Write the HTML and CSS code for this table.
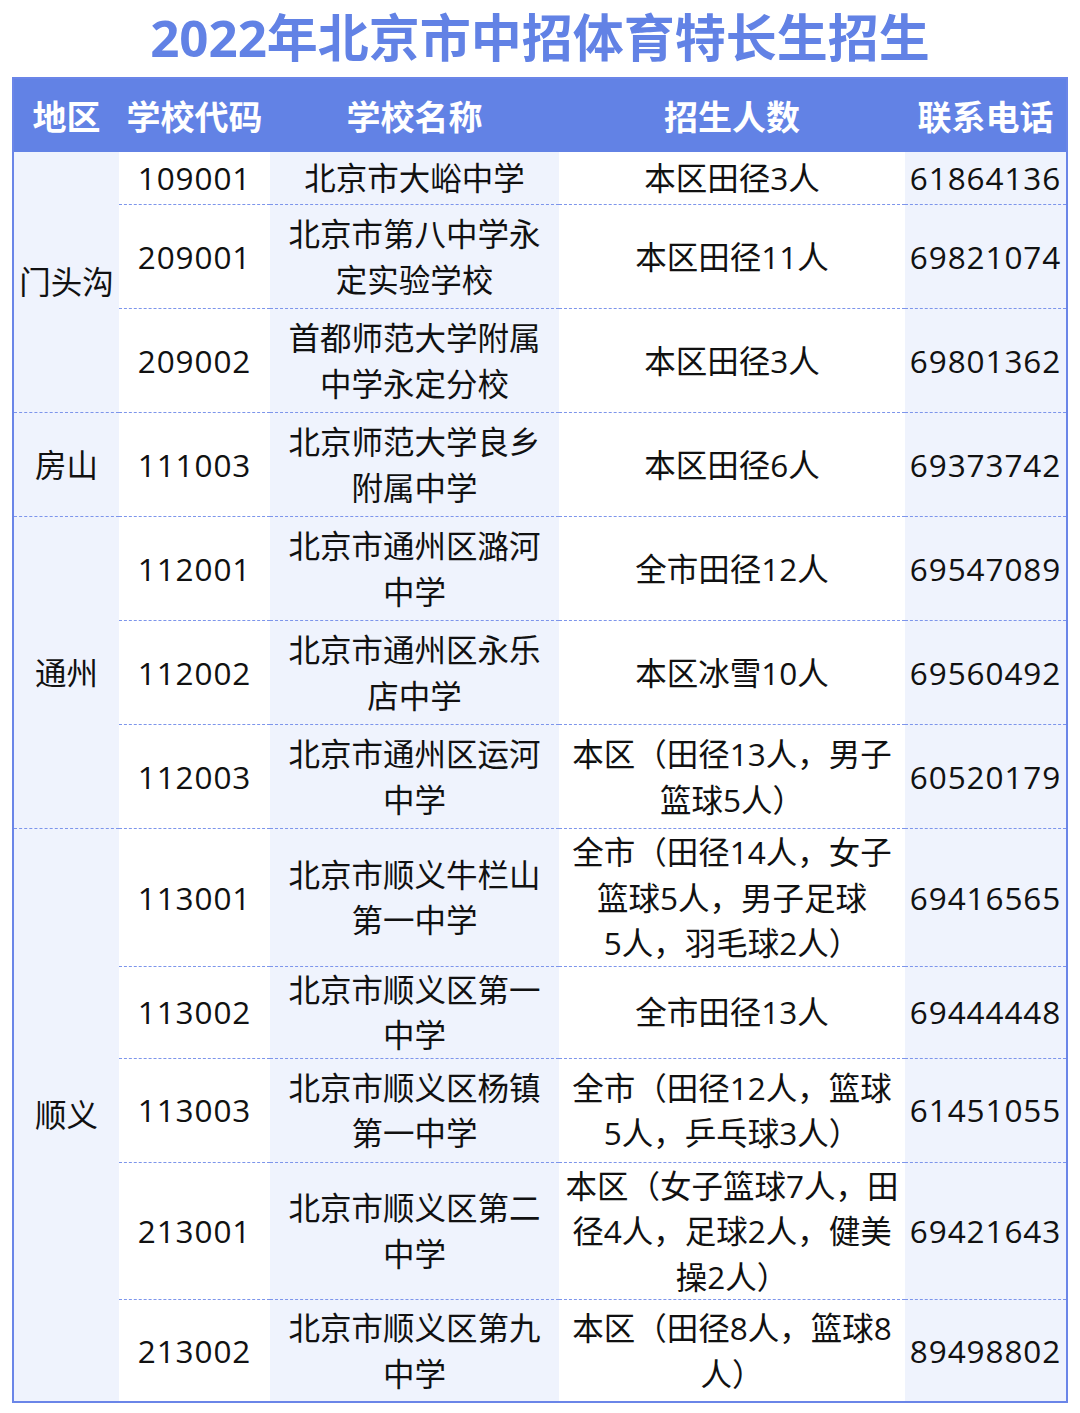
FILE: index.html
```html
<!DOCTYPE html>
<html lang="zh-CN">
<head>
<meta charset="utf-8">
<title>2022年北京市中招体育特长生招生</title>
<link rel="stylesheet" href="styles.css">
</head>
<body>
<h1 class="title">2022年北京市中招体育特长生招生</h1>
<table class="sheet">
  <colgroup>
    <col class="c1"><col class="c2"><col class="c3"><col class="c4"><col class="c5">
  </colgroup>
  <thead>
    <tr class="head">
      <th>地区</th><th>学校代码</th><th>学校名称</th><th>招生人数</th><th>联系电话</th>
    </tr>
  </thead>
  <tbody>
    <tr class="h52">
      <td class="area" rowspan="3">门头沟</td><td class="code">109001</td><td class="name">北京市大峪中学</td><td class="num">本区田径3人</td><td class="tel">61864136</td>
    </tr>
    <tr class="h104">
      <td class="code">209001</td><td class="name">北京市第八中学永<br>定实验学校</td><td class="num">本区田径11人</td><td class="tel">69821074</td>
    </tr>
    <tr class="h104">
      <td class="code">209002</td><td class="name">首都师范大学附属<br>中学永定分校</td><td class="num">本区田径3人</td><td class="tel">69801362</td>
    </tr>
    <tr class="h104">
      <td class="area">房山</td><td class="code">111003</td><td class="name">北京师范大学良乡<br>附属中学</td><td class="num">本区田径6人</td><td class="tel">69373742</td>
    </tr>
    <tr class="h104">
      <td class="area" rowspan="3">通州</td><td class="code">112001</td><td class="name">北京市通州区潞河<br>中学</td><td class="num">全市田径12人</td><td class="tel">69547089</td>
    </tr>
    <tr class="h104">
      <td class="code">112002</td><td class="name">北京市通州区永乐<br>店中学</td><td class="num">本区冰雪10人</td><td class="tel">69560492</td>
    </tr>
    <tr class="h104">
      <td class="code">112003</td><td class="name">北京市通州区运河<br>中学</td><td class="num">本区（田径13人，男子<br>篮球5人）</td><td class="tel">60520179</td>
    </tr>
    <tr class="h137">
      <td class="area" rowspan="5">顺义</td><td class="code">113001</td><td class="name">北京市顺义牛栏山<br>第一中学</td><td class="num">全市（田径14人，女子<br>篮球5人，男子足球<br>5人，羽毛球2人）</td><td class="tel">69416565</td>
    </tr>
    <tr class="h91">
      <td class="code">113002</td><td class="name">北京市顺义区第一<br>中学</td><td class="num">全市田径13人</td><td class="tel">69444448</td>
    </tr>
    <tr class="h104">
      <td class="code">113003</td><td class="name">北京市顺义区杨镇<br>第一中学</td><td class="num">全市（田径12人，篮球<br>5人，乒乓球3人）</td><td class="tel">61451055</td>
    </tr>
    <tr class="h137">
      <td class="code">213001</td><td class="name">北京市顺义区第二<br>中学</td><td class="num">本区（女子篮球7人，田<br>径4人，足球2人，健美<br>操2人）</td><td class="tel">69421643</td>
    </tr>
    <tr class="h102">
      <td class="code">213002</td><td class="name">北京市顺义区第九<br>中学</td><td class="num">本区（田径8人，篮球8<br>人）</td><td class="tel">89498802</td>
    </tr>
  </tbody>
</table>
</body>
</html>
```
FILE: styles.css
```css
html, body {
  margin: 0;
  padding: 0;
  background: #ffffff;
}

body {
  width: 1080px;
  font-family: "Open Sans", "Noto Sans CJK SC", sans-serif;
  color: #111111;
}

.title {
  margin: 0;
  height: 77px;
  line-height: 74px;
  text-align: center;
  font-size: 51px;
  font-weight: 700;
  color: #6282e5;
  letter-spacing: 0;
}

.sheet {
  margin-left: 12px;
  width: 1056px;
  table-layout: fixed;
  border-collapse: separate;
  border-spacing: 0;
  border: 2px solid #6a85e8;
}

.c1 { width: 105px; }
.c2 { width: 151px; }
.c3 { width: 289px; }
.c4 { width: 346px; }
.c5 { width: 161px; }

.head {
  height: 73px;
  background: #6282e5;
}

.head th {
  padding: 0;
  color: #ffffff;
  font-size: 34px;
  font-weight: 700;
  text-align: center;
  vertical-align: middle;
  white-space: nowrap;
}

.sheet td {
  padding: 0;
  text-align: center;
  vertical-align: middle;
  font-size: 31.5px;
  line-height: 45.5px;
  white-space: nowrap;
}

.sheet tbody tr + tr td {
  border-top: 1px dashed #7d95eb;
}

.area, .name, .tel {
  background: #eff3fd;
}

.code, .num {
  background: #ffffff;
}

.code, .tel {
  letter-spacing: 0.9px;
}

.h52 { height: 52px; }
.h91 { height: 91px; }
.h102 { height: 102px; }
.h104 { height: 104px; }
.h137 { height: 137px; }
```
